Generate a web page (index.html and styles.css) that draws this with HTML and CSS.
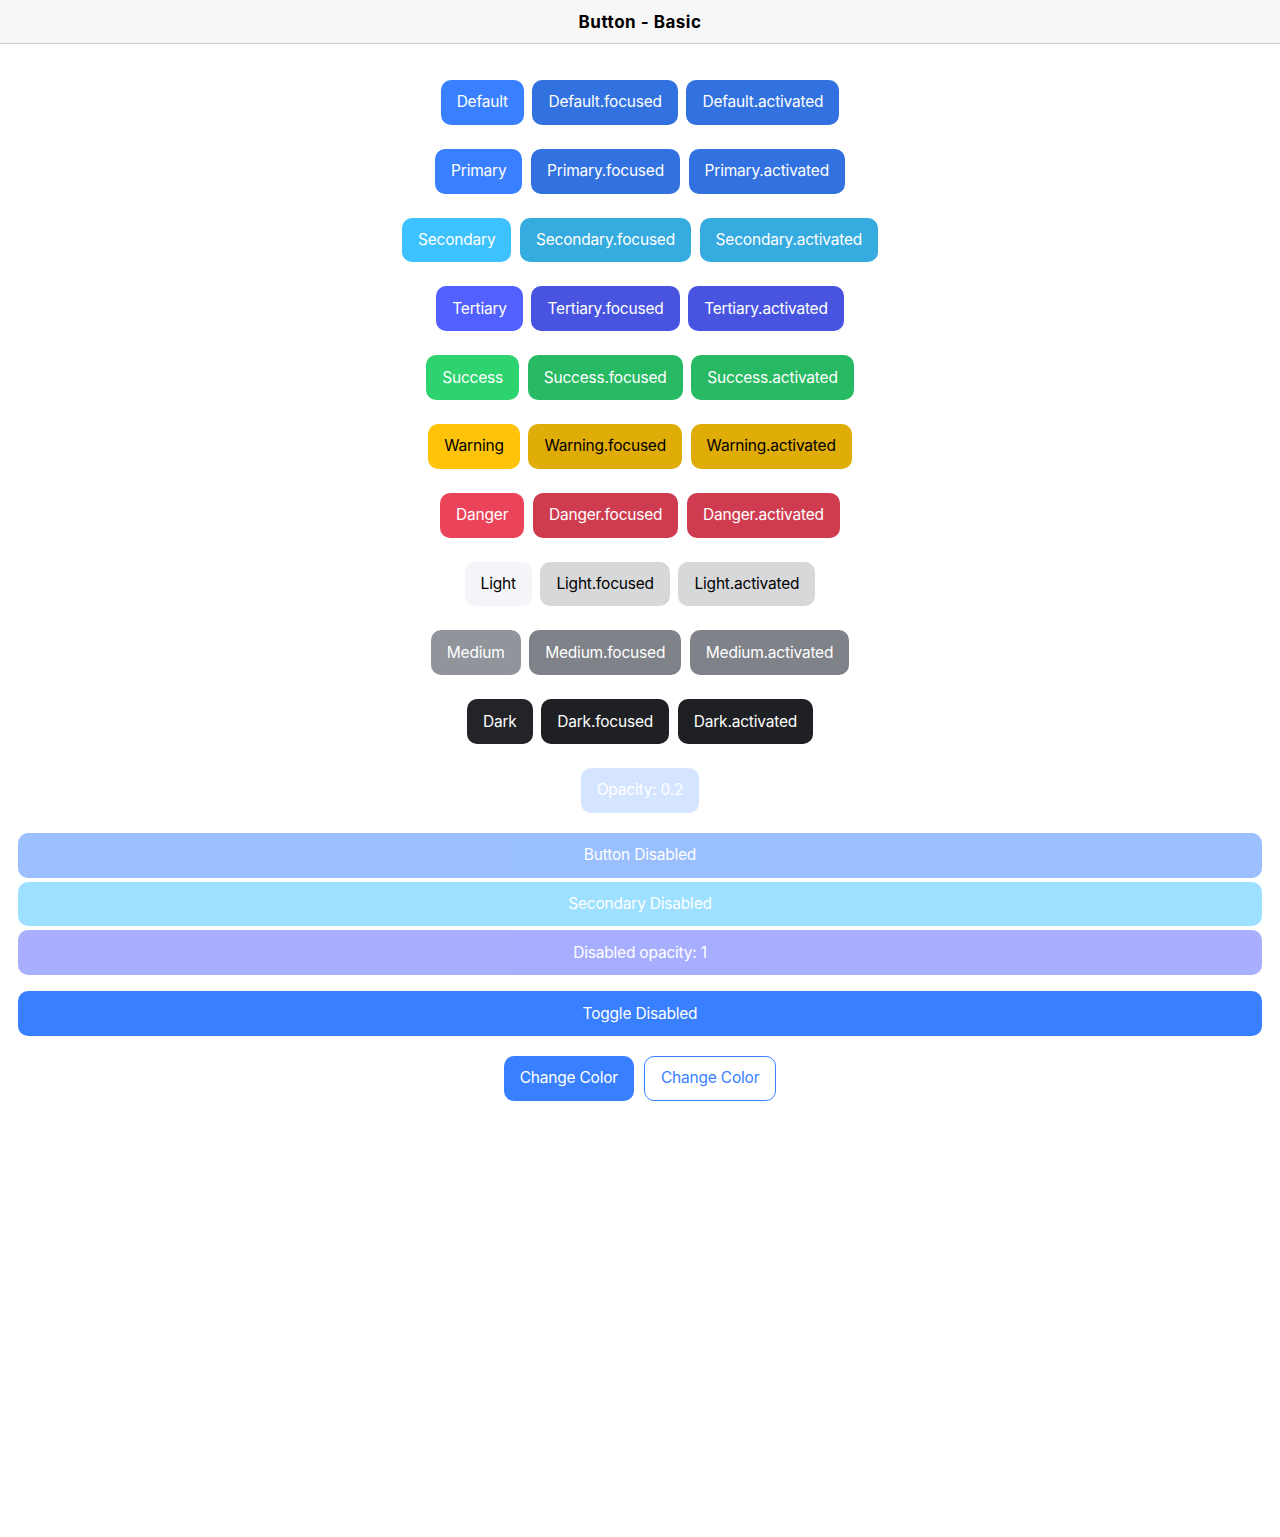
FILE: index.html
```html
<!DOCTYPE html>
<html>
<head>
<meta charset="utf-8">
<title>Button - Basic</title>
<link rel="stylesheet" href="styles.css">
</head>
<body>
<header class="toolbar"><h1 class="title">Button - Basic</h1></header>
<main class="content">
  <div class="rows">
    <div class="row"><span class="btn primary">Default</span><span class="btn primary-shade">Default.focused</span><span class="btn primary-shade">Default.activated</span></div>
    <div class="row"><span class="btn primary">Primary</span><span class="btn primary-shade">Primary.focused</span><span class="btn primary-shade">Primary.activated</span></div>
    <div class="row"><span class="btn secondary">Secondary</span><span class="btn secondary-shade">Secondary.focused</span><span class="btn secondary-shade">Secondary.activated</span></div>
    <div class="row"><span class="btn tertiary">Tertiary</span><span class="btn tertiary-shade">Tertiary.focused</span><span class="btn tertiary-shade">Tertiary.activated</span></div>
    <div class="row"><span class="btn success">Success</span><span class="btn success-shade">Success.focused</span><span class="btn success-shade">Success.activated</span></div>
    <div class="row"><span class="btn warning">Warning</span><span class="btn warning-shade">Warning.focused</span><span class="btn warning-shade">Warning.activated</span></div>
    <div class="row"><span class="btn danger">Danger</span><span class="btn danger-shade">Danger.focused</span><span class="btn danger-shade">Danger.activated</span></div>
    <div class="row"><span class="btn light">Light</span><span class="btn light-shade">Light.focused</span><span class="btn light-shade">Light.activated</span></div>
    <div class="row"><span class="btn medium">Medium</span><span class="btn medium-shade">Medium.focused</span><span class="btn medium-shade">Medium.activated</span></div>
    <div class="row"><span class="btn dark">Dark</span><span class="btn dark-shade">Dark.focused</span><span class="btn dark-shade">Dark.activated</span></div>
    <div class="row"><span class="btn primary faded">Opacity: 0.2</span></div>
  </div>
  <div class="blocks">
    <span class="btn block primary disabled">Button Disabled</span>
    <span class="btn block secondary disabled">Secondary Disabled</span>
    <span class="btn block tertiary disabled">Disabled opacity: 1</span>
  </div>
  <span class="btn block primary toggle">Toggle Disabled</span>
  <div class="row change-row"><span class="btn primary">Change Color</span><span class="btn outline">Change Color</span></div>
</main>
</body>
</html>
```
FILE: styles.css
```css
* { box-sizing: border-box; }
html, body { margin: 0; padding: 0; background: #fff; }
body { font-family: Inter, "Noto Sans", sans-serif; color: #000; }

.toolbar {
  height: 44px;
  background: #f7f7f7;
  border-bottom: 1px solid #c9c9cc;
  display: flex;
  align-items: center;
  justify-content: center;
}
.title {
  margin: 0;
  font-size: 17px;
  font-weight: 700;
  letter-spacing: 0.5px;
}

.content { padding: 36px 18px; }

.rows { display: flex; flex-direction: column; gap: 24px; }
.row { display: flex; justify-content: center; gap: 8.6px; }

.btn {
  display: inline-flex;
  align-items: center;
  justify-content: center;
  height: 44.8px;
  padding: 0 16px 1px;
  border-radius: 10px;
  font-size: 15.5px;
  color: #fff;
  white-space: nowrap;
  letter-spacing: -0.2px;
}

.primary { background: #3880ff; }
.primary-shade { background: #3171e0; }
.secondary { background: #3dc2ff; }
.secondary-shade { background: #36abe0; }
.tertiary { background: #5260ff; }
.tertiary-shade { background: #4854e0; }
.success { background: #2dd36f; }
.success-shade { background: #28ba62; }
.warning { background: #ffc409; color: #000; }
.warning-shade { background: #e0ac08; color: #000; }
.danger { background: #eb445a; }
.danger-shade { background: #cf3c4f; }
.light { background: #f4f5f8; color: #000; }
.light-shade { background: #d7d8da; color: #000; }
.medium { background: #92949c; }
.medium-shade { background: #808289; }
.dark { background: #222428; }
.dark-shade { background: #1e2023; }

.faded { opacity: 0.2; }
.disabled { opacity: 0.5; }

.blocks { margin-top: 20px; display: flex; flex-direction: column; gap: 4px; }
.block { display: flex; width: 100%; }
.toggle { margin-top: 16px; }
.change-row { margin-top: 20px; gap: 10px; }

.outline {
  background: #fff;
  color: #3880ff;
  border: 1px solid #3880ff;
}
```
